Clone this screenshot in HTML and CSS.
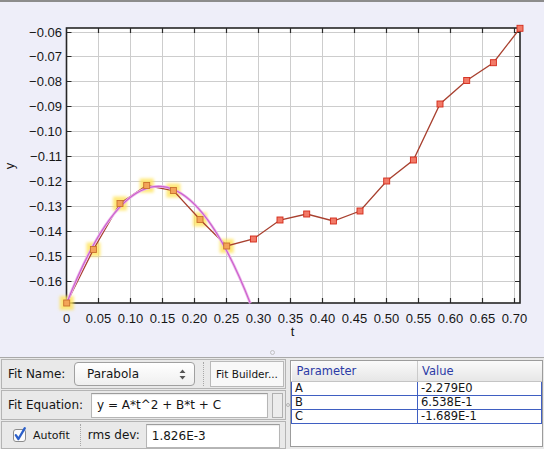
FILE: index.html
```html
<!DOCTYPE html>
<html>
<head>
<meta charset="utf-8">
<link rel="stylesheet" href="styles.css">
</head>
<body>
<div class="app">
  <div class="chart">
    <svg class="plot" width="544" height="355" viewBox="0 2 544 355" xmlns="http://www.w3.org/2000/svg">
      <defs>
        <filter id="glow" x="-50%" y="-50%" width="200%" height="200%">
          <feGaussianBlur stdDeviation="1.8"/>
        </filter>
      </defs>
      <rect x="66.5" y="28" width="453.5" height="275" fill="#ffffff"/>
      <path class="grid" d="M98.5 28V303M130.5 28V303M162.5 28V303M194.5 28V303M226.5 28V303M258.5 28V303M290.5 28V303M322.5 28V303M354.5 28V303M386.5 28V303M418.5 28V303M450.5 28V303M482.5 28V303M514.5 28V303M66.5 32.5H520M66.5 56.5H520M66.5 81.5H520M66.5 106.5H520M66.5 131.5H520M66.5 156.5H520M66.5 181.5H520M66.5 206.5H520M66.5 231.5H520M66.5 256.5H520M66.5 281.5H520"/>
      <path class="ticks" d="M66.5 32.5h5M66.5 56.5h5M66.5 81.5h5M66.5 106.5h5M66.5 131.5h5M66.5 156.5h5M66.5 181.5h5M66.5 206.5h5M66.5 231.5h5M66.5 256.5h5M66.5 281.5h5M520 32.5h-5M520 56.5h-5M520 81.5h-5M520 106.5h-5M520 131.5h-5M520 156.5h-5M520 181.5h-5M520 206.5h-5M520 231.5h-5M520 256.5h-5M520 281.5h-5M98.5 28v5M130.5 28v5M162.5 28v5M194.5 28v5M226.5 28v5M258.5 28v5M290.5 28v5M322.5 28v5M354.5 28v5M386.5 28v5M418.5 28v5M450.5 28v5M482.5 28v5M514.5 28v5M98.5 303v-5M130.5 303v-5M162.5 303v-5M194.5 303v-5M226.5 303v-5M258.5 303v-5M290.5 303v-5M322.5 303v-5M354.5 303v-5M386.5 303v-5M418.5 303v-5M450.5 303v-5M482.5 303v-5M514.5 303v-5"/>
      <rect class="frame" x="66.5" y="28" width="453.5" height="275"/>

      <g class="glows" filter="url(#glow)">
        <rect x="59.7" y="296" width="14" height="14"/>
        <rect x="86.4" y="242.5" width="14" height="14"/>
        <rect x="113" y="196.5" width="14" height="14"/>
        <rect x="139.7" y="178.5" width="14" height="14"/>
        <rect x="166.4" y="183.5" width="14" height="14"/>
        <rect x="193" y="212.5" width="14" height="14"/>
        <rect x="219.7" y="239" width="14" height="14"/>
      </g>

      <polyline class="data" points="66.7,303 93.4,249.5 120,203.5 146.7,185.5 173.4,190.5 200,219.5 226.7,246 253.4,239 280,220 306.7,214 333.4,221 360,211 386.7,181 413.4,160 440,104 466.7,80.5 493.4,62.7 520,28.3"/>
      <path class="fit-under" d="M66.7 303.2Q158.5 69.7 250.3 303.2"/>
      <path class="fit" d="M66.7 303.2Q158.5 69.7 250.3 303.2"/>

      <g class="mk sel">
        <rect x="63.7" y="300" width="6" height="6"/>
        <rect x="90.4" y="246.5" width="6" height="6"/>
        <rect x="117" y="200.5" width="6" height="6"/>
        <rect x="143.7" y="182.5" width="6" height="6"/>
        <rect x="170.4" y="187.5" width="6" height="6"/>
        <rect x="197" y="216.5" width="6" height="6"/>
        <rect x="223.7" y="243" width="6" height="6"/>
      </g>
      <g class="mk">
        <rect x="250.4" y="236" width="6" height="6"/>
        <rect x="277" y="217" width="6" height="6"/>
        <rect x="303.7" y="211" width="6" height="6"/>
        <rect x="330.4" y="218" width="6" height="6"/>
        <rect x="357" y="208" width="6" height="6"/>
        <rect x="383.7" y="178" width="6" height="6"/>
        <rect x="410.4" y="157" width="6" height="6"/>
        <rect x="437" y="101" width="6" height="6"/>
        <rect x="463.7" y="77.5" width="6" height="6"/>
        <rect x="490.4" y="59.7" width="6" height="6"/>
        <rect x="517" y="25.3" width="6" height="6"/>
      </g>

      <g class="ylab">
        <text x="62" y="36.8">−0.06</text>
        <text x="62" y="60.8">−0.07</text>
        <text x="62" y="85.8">−0.08</text>
        <text x="62" y="110.8">−0.09</text>
        <text x="62" y="135.8">−0.10</text>
        <text x="62" y="160.8">−0.11</text>
        <text x="62" y="185.8">−0.12</text>
        <text x="62" y="210.8">−0.13</text>
        <text x="62" y="235.8">−0.14</text>
        <text x="62" y="260.8">−0.15</text>
        <text x="62" y="285.8">−0.16</text>
      </g>
      <g class="xlab">
        <text x="66.5" y="322.5">0</text>
        <text x="98.5" y="322.5">0.05</text>
        <text x="130.5" y="322.5">0.10</text>
        <text x="162.5" y="322.5">0.15</text>
        <text x="194.5" y="322.5">0.20</text>
        <text x="226.5" y="322.5">0.25</text>
        <text x="258.5" y="322.5">0.30</text>
        <text x="290.5" y="322.5">0.35</text>
        <text x="322.5" y="322.5">0.40</text>
        <text x="354.5" y="322.5">0.45</text>
        <text x="386.5" y="322.5">0.50</text>
        <text x="418.5" y="322.5">0.55</text>
        <text x="450.5" y="322.5">0.60</text>
        <text x="482.5" y="322.5">0.65</text>
        <text x="514.5" y="322.5">0.70</text>
      </g>
      <text class="axtitle" x="292.5" y="336">t</text>
      <text class="axtitle" transform="translate(13.5 166) rotate(-90)">y</text>
      <circle class="grip-dot" cx="272.5" cy="352.5" r="2"/>
    </svg>
  </div>

  <div class="panel">
    <div class="left">
      <div class="row">
        <span class="lbl w-name">Fit Name:</span>
        <div class="combo">
          <span>Parabola</span>
          <svg class="arrows" width="7" height="11" viewBox="0 0 7 11"><path d="M3.5 0.5L6.5 4H0.5Z M3.5 10.5L6.5 7H0.5Z"/></svg>
        </div>
        <div class="sep"></div>
        <div class="btn">Fit Builder...</div>
      </div>
      <div class="row">
        <span class="lbl w-eq">Fit Equation:</span>
        <div class="field eq">y = A*t^2 + B*t + C</div>
        <div class="mini"></div>
      </div>
      <div class="row r3">
        <svg class="check" width="14" height="15" viewBox="0 0 14 15">
          <rect x="0.5" y="2.5" width="12" height="12" rx="2.5" fill="#fbfbfb" stroke="#8c8c8c"/>
          <path d="M2.8 8.2L5.4 12L11.8 1.2" fill="none" stroke="#2b5fc9" stroke-width="2.3" stroke-linecap="round" stroke-linejoin="round"/>
        </svg>
        <span class="small">Autofit</span>
        <div class="sep sep2"></div>
        <span class="lbl w-rms">rms dev:</span>
        <div class="field rms">1.826E-3</div>
      </div>
    </div>
    <div class="grip"></div>
    <div class="tablebox">
      <table class="params">
        <thead>
          <tr><th class="c1">Parameter</th><th class="c2">Value</th></tr>
        </thead>
        <tbody>
          <tr><td class="c1">A</td><td class="c2">-2.279E0</td></tr>
          <tr><td class="c1">B</td><td class="c2">6.538E-1</td></tr>
          <tr><td class="c1">C</td><td class="c2">-1.689E-1</td></tr>
        </tbody>
      </table>
    </div>
  </div>
</div>
</body>
</html>
```

FILE: styles.css
```css
* { box-sizing: border-box; }
html, body { margin: 0; padding: 0; }
body {
  width: 544px;
  height: 449px;
  overflow: hidden;
  background: #e9e9e9;
  font-family: "DejaVu Sans", sans-serif;
  font-size: 12px;
  color: #151515;
}
.app { display: flex; flex-direction: column; }

.chart {
  height: 357px;
  border-top: 2px solid #8c8c8c;
  background: #eeeef9;
}
.plot { display: block; }
.grid { stroke: #cdcdcd; stroke-width: 1; fill: none; }
.ticks { stroke: #2a2a2a; stroke-width: 1.2; fill: none; }
.frame { fill: none; stroke: #262626; stroke-width: 1.6; }
.glows rect { fill: #ffe45a; opacity: 0.8; }
.data { fill: none; stroke: #a8402f; stroke-width: 1.3; }
.fit-under { fill: none; stroke: #ecb6ec; stroke-width: 2.8; }
.fit { fill: none; stroke: #cc62cc; stroke-width: 1.2; }
.mk rect { fill: #f27a68; stroke: #d22a1a; stroke-width: 0.9; }
.mk.sel rect { fill: #f3a458; stroke: #c8702c; }
.ylab text {
  font-family: "Liberation Sans", Arial, sans-serif;
  font-size: 13px;
  fill: #161616;
  text-anchor: end;
}
.xlab text {
  font-family: "Liberation Sans", Arial, sans-serif;
  font-size: 13px;
  fill: #161616;
  text-anchor: middle;
}
.axtitle {
  font-family: "Liberation Sans", Arial, sans-serif;
  font-size: 13px;
  fill: #161616;
  text-anchor: middle;
}
.grip-dot { fill: none; stroke: #b5b5b5; stroke-width: 0.8; }

.panel {
  height: 92px;
  border-top: 1px solid #a9a9a9;
  display: flex;
  padding: 1px 0 0 1px;
  background: #e9e9e9;
}
.left {
  width: 285px;
  display: flex;
  flex-direction: column;
  gap: 1px;
}
.row {
  display: flex;
  align-items: center;
  height: 30px;
  border: 1px solid #b4b4b4;
  padding-left: 6px;
}
.row.r3 { height: 28px; }
.lbl { white-space: nowrap; }
.w-name { width: 66px; }
.w-eq { width: 83px; }
.w-rms { width: 58px; margin-left: 7px; }

.combo {
  width: 121px;
  height: 24px;
  border: 1px solid #a0a0a0;
  border-radius: 4px;
  background: linear-gradient(#ffffff, #efefef);
  display: flex;
  align-items: center;
  padding-left: 12px;
  padding-right: 8px;
  justify-content: space-between;
}
.arrows path { fill: #555; }
.sep {
  width: 1px;
  height: 24px;
  margin-left: 8px;
  border-left: 1px dotted #a8a8a8;
}
.btn {
  width: 74px;
  height: 26px;
  margin-left: 6px;
  border: 1px solid #b9b9b9;
  background: #f8f8f8;
  font-size: 10.5px;
  display: flex;
  align-items: center;
  justify-content: center;
  white-space: nowrap;
}
.field {
  height: 25px;
  background: #ffffff;
  border: 1px solid #b6b6b6;
  border-top-color: #9c9c9c;
  box-shadow: inset 0 1px 1px rgba(0,0,0,0.08);
  display: flex;
  align-items: center;
  padding-left: 5px;
  white-space: nowrap;
}
.eq { width: 177px; }
.mini {
  width: 11px;
  height: 25px;
  margin-left: 4px;
  border: 1px solid #b0b0b0;
  background: #ececec;
}
.check { margin-left: 5px; margin-top: -1px; overflow: visible; }
.small { font-size: 11px; margin-left: 6px; }
.sep2 { margin-left: 10px; height: 22px; }
.rms { width: 134px; height: 24px; margin-top: 2px; }

.grip {
  width: 4px;
  height: 4px;
  margin: 44px 0 0 0;
  border: 1px solid #b5b5b5;
  border-radius: 50%;
}
.tablebox {
  width: 253px;
  height: 87px;
  margin: 1px 0 0 0;
  border: 1px solid #9c9c9c;
  background: #ffffff;
}
.params {
  width: 100%;
  border-collapse: collapse;
  font-size: 11.5px;
  table-layout: fixed;
}
.params th {
  height: 20px;
  padding: 0 0 0 5px;
  text-align: left;
  font-weight: normal;
  color: #2b3aa6;
  background: linear-gradient(#fafafa, #e6e6e6);
  border-bottom: 1px solid #c4c4c4;
}
.params th.c1 { width: 126px; border-right: 1px solid #cacaca; }
.params th.c2 { padding-left: 4px; }
.params td {
  height: 14px;
  line-height: 12px;
  padding: 0 0 0 3px;
  border: 1px solid #3f5fc2;
  white-space: nowrap;
}
.params td.c1 { padding-left: 3px; }
```
